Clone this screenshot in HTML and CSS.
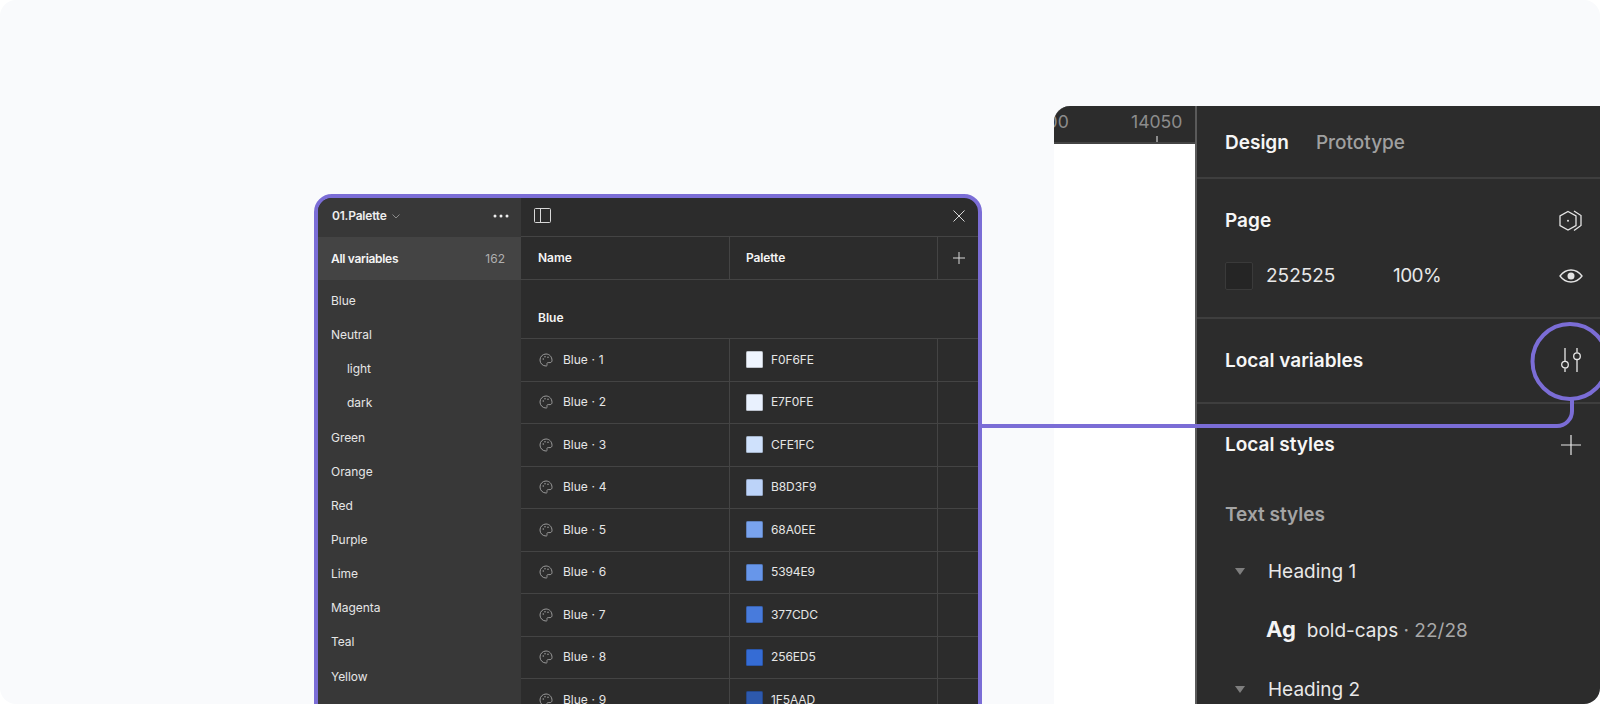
FILE: index.html
```html
<!DOCTYPE html>
<html lang="en">
<head>
<meta charset="utf-8">
<title>Local variables</title>
<link rel="stylesheet" href="styles.css">
</head>
<body>
<svg width="0" height="0" class="defs">
  <symbol id="palette" viewBox="0 0 14 14">
    <path d="M7 1a6 6 0 1 0 0 12c1.100 0 1.400-.8 1-1.500-.5-.9.2-1.900 1.200-1.900H11c1.200 0 2-.9 2-2.100C13 3.600 10.300 1 7 1z" fill="none" stroke="#9a9a9a" stroke-width="1"/>
    <circle cx="4.300" cy="6" r=".8" fill="#9a9a9a"/><circle cx="6" cy="3.800" r=".8" fill="#9a9a9a"/><circle cx="9" cy="4.200" r=".8" fill="#9a9a9a"/>
  </symbol>
</svg>
<main class="hero">
  <section class="vars">
    <aside class="side">
      <div class="side-head">
        <span class="file">01.Palette</span>
        <svg class="caret" width="8" height="5" viewBox="0 0 8 5"><path d="M.5.5 4 4 7.500.5" fill="none" stroke="#8a8a8a"/></svg>
        <svg class="dots" width="16" height="4" viewBox="0 0 16 4"><circle cx="2" cy="2" r="1.500"/><circle cx="8" cy="2" r="1.500"/><circle cx="14" cy="2" r="1.500"/></svg>
      </div>
      <div class="side-all"><span class="all">All variables</span><span class="count">162</span></div>
      <ul class="side-list">
        <li>Blue</li><li>Neutral</li><li class="sub">light</li><li class="sub">dark</li><li>Green</li><li>Orange</li><li>Red</li><li>Purple</li><li>Lime</li><li>Magenta</li><li>Teal</li><li>Yellow</li>
      </ul>
    </aside>
    <div class="table">
      <div class="tbar">
        <svg width="17" height="15" viewBox="0 0 17 15"><rect x=".5" y=".5" width="16" height="14" rx="1" fill="none" stroke="#d8d8d8"/><path d="M6.500 .5v14" stroke="#d8d8d8"/></svg>
        <svg width="12" height="12" viewBox="0 0 12 12"><path d="M.5.5l11 11M11.500.5l-11 11" stroke="#d8d8d8"/></svg>
      </div>
      <div class="row head"><div class="c1">Name</div><div class="c2">Palette</div><div class="c3"><svg width="12" height="12" viewBox="0 0 12 12"><path d="M6 0v12M0 6h12" stroke="#d8d8d8"/></svg></div></div>
      <div class="group">Blue</div>
      <div class="row"><div class="c1"><svg class="pal" width="14" height="14"><use href="#palette"/></svg>Blue · 1</div><div class="c2"><i class="sw sw1"></i>F0F6FE</div><div class="c3"></div></div>
      <div class="row"><div class="c1"><svg class="pal" width="14" height="14"><use href="#palette"/></svg>Blue · 2</div><div class="c2"><i class="sw sw2"></i>E7F0FE</div><div class="c3"></div></div>
      <div class="row"><div class="c1"><svg class="pal" width="14" height="14"><use href="#palette"/></svg>Blue · 3</div><div class="c2"><i class="sw sw3"></i>CFE1FC</div><div class="c3"></div></div>
      <div class="row"><div class="c1"><svg class="pal" width="14" height="14"><use href="#palette"/></svg>Blue · 4</div><div class="c2"><i class="sw sw4"></i>B8D3F9</div><div class="c3"></div></div>
      <div class="row"><div class="c1"><svg class="pal" width="14" height="14"><use href="#palette"/></svg>Blue · 5</div><div class="c2"><i class="sw sw5"></i>68A0EE</div><div class="c3"></div></div>
      <div class="row"><div class="c1"><svg class="pal" width="14" height="14"><use href="#palette"/></svg>Blue · 6</div><div class="c2"><i class="sw sw6"></i>5394E9</div><div class="c3"></div></div>
      <div class="row"><div class="c1"><svg class="pal" width="14" height="14"><use href="#palette"/></svg>Blue · 7</div><div class="c2"><i class="sw sw7"></i>377CDC</div><div class="c3"></div></div>
      <div class="row"><div class="c1"><svg class="pal" width="14" height="14"><use href="#palette"/></svg>Blue · 8</div><div class="c2"><i class="sw sw8"></i>256ED5</div><div class="c3"></div></div>
      <div class="row"><div class="c1"><svg class="pal" width="14" height="14"><use href="#palette"/></svg>Blue · 9</div><div class="c2"><i class="sw sw9"></i>1F5AAD</div><div class="c3"></div></div>
    </div>
  </section>

  <section class="editor">
    <div class="canvas">
      <div class="ruler">
        <span class="r-old">14000</span>
        <span class="r-new">14050</span>
        <i class="tick"></i>
      </div>
    </div>
    <div class="panel">
      <div class="tabs"><span class="on">Design</span><span class="off">Prototype</span></div>
      <div class="sec page">
        <div class="line head-line"><b>Page</b>
          <svg width="26" height="22" viewBox="0 0 26 22" fill="none" stroke="#e4e4e4" stroke-width="1.300"><path d="M10 1.500l8 4.500v9.500l-8 4.500-8-4.500V6z"/><path d="M16 1l7 4.500v10L16 20.500"/><circle cx="10" cy="10.700" r="1" fill="#e4e4e4" stroke="none"/></svg>
        </div>
        <div class="line fill"><i class="pg-sw"></i><span class="hex">252525</span><span class="pct">100%</span>
          <svg width="24" height="14" viewBox="0 0 24 14" fill="none" stroke="#e4e4e4" stroke-width="1.300"><path d="M1 7c3-4 7-6 11-6s8 2 11 6c-3 4-7 6-11 6S4 11 1 7z"/><circle cx="12" cy="7" r="3.500" fill="#e4e4e4" stroke="none"/></svg>
        </div>
      </div>
      <div class="sec vars-sec"><b>Local variables</b>
        <svg class="sliders" width="20" height="24" viewBox="0 0 20 24" fill="none" stroke="#e8e8e8" stroke-width="1.300"><path d="M4 0v13M4 20.500V24M16 0v4.500M16 12v12"/><circle cx="4" cy="16.700" r="3.300"/><circle cx="16" cy="8.200" r="3.300"/></svg>
      </div>
      <div class="styles">
        <div class="st-head"><b>Local styles</b>
          <svg width="20" height="20" viewBox="0 0 20 20"><path d="M10 0v20M0 10h20" stroke="#e8e8e8" stroke-width="1.200"/></svg>
        </div>
        <div class="st-label">Text styles</div>
        <div class="st-row"><i class="tri"></i>Heading 1</div>
        <div class="st-item"><span class="ag">Ag</span><span>bold-caps<span class="meta"> · 22/28</span></span></div>
        <div class="st-row"><i class="tri"></i>Heading 2</div>
      </div>
    </div>
  </section>

  <svg class="link" width="1600" height="704" viewBox="0 0 1600 704" fill="none" stroke="#7B6DD6" stroke-width="4">
    <circle cx="1570" cy="361.500" r="37.500"/>
    <path d="M982 426H1557a15 15 0 0 0 15-15V399"/>
  </svg>
</main>
</body>
</html>
```

FILE: styles.css
```css
* { box-sizing: border-box; }
html, body { margin: 0; height: 704px; overflow: hidden; background: #fff; }
body { font-family: Inter, "Liberation Sans", sans-serif; color: #eee; }
.defs { position: absolute; }
ul { list-style: none; margin: 0; padding: 0; }
i { display: block; }

.hero { position: relative; width: 1600px; height: 704px; background: #F9FAFC; border-radius: 16px; overflow: hidden; }
.link { position: absolute; left: 0; top: 0; }

/* variables window */
.vars { position: absolute; left: 314px; top: 194px; width: 668px; height: 560px; display: flex; border: 4px solid #7B6DD6; border-radius: 18px; overflow: hidden; font-size: 12px; line-height: 16px; background: #2C2C2C; }
.side { width: 203px; flex: none; background: #383838; color: #e6e6e6; }
.side-head { height: 39px; display: flex; align-items: center; padding: 0 12px 3px 14px; }
.file { font-weight: 600; color: #eee; letter-spacing: -.2px; }
.caret { margin-left: 5px; }
.dots { margin-left: auto; fill: #eee; }
.side-all { height: 43px; background: #444; display: flex; justify-content: space-between; align-items: center; padding: 0 16px 0 13px; font-weight: 600; color: #f4f4f4; }
.all { letter-spacing: -.3px; }
.count { font-weight: 400; color: #b0b0b0; }
.side-list { padding-top: 4px; }
.side-list li { height: 34.15px; padding-left: 13px; display: flex; align-items: center; letter-spacing: -.05px; }
.side-list .sub { padding-left: 29px; }

.table { flex: 1; min-width: 0; color: #e6e6e6; }
.tbar { height: 39px; display: flex; align-items: center; justify-content: space-between; padding: 0 13px 3px; border-bottom: 1px solid #444; }
.row { height: 42.5px; display: grid; grid-template-columns: 209px 208px 1fr; border-bottom: 1px solid #444; }
.row.head { height: 43px; font-weight: 600; color: #f4f4f4; }
.c1, .c2, .c3 { display: flex; align-items: center; }
.c1 { padding-left: 17px; border-right: 1px solid #444; word-spacing: .3px; }
.c2 { padding-left: 16px; border-right: 1px solid #444; letter-spacing: -.1px; }
.c3 { justify-content: center; padding-left: 2px; }
.group { height: 59px; padding: 30px 0 0 17px; font-weight: 600; color: #f4f4f4; border-bottom: 1px solid #444; }
.pal { margin: 0 10px 0 1px; flex: none; }
.sw { width: 17px; height: 17px; margin-right: 8px; border-radius: 1.5px; border: 1px solid rgba(0,0,0,.2); flex: none; }
.sw1 { background: #EFF5FE; }
.sw2 { background: #E9F1FE; }
.sw3 { background: #CFE1FC; }
.sw4 { background: #BCD3F9; }
.sw5 { background: #79A3EE; }
.sw6 { background: #6796EA; }
.sw7 { background: #487BDC; }
.sw8 { background: #356CD5; }
.sw9 { background: #2D59AD; }

/* editor window */
.editor { position: absolute; left: 1054px; top: 106px; width: 546px; height: 598px; display: flex; background: #2C2C2C; border-radius: 16px 0 0 0; overflow: hidden; }
.canvas { width: 141px; flex: none; background: #fff; }
.ruler { position: relative; height: 38px; background: #2C2C2C; border-bottom: 2px solid #444; overflow: hidden; font-size: 17.6px; line-height: 22px; color: #8c8c8c; }
.r-old { position: absolute; left: -37px; top: 5px; }
.r-new { position: absolute; left: 77px; top: 5px; }
.tick { position: absolute; left: 102px; top: 30px; width: 1.500px; height: 6px; background: #8c8c8c; }

.panel { flex: 1; min-width: 0; border-left: 2px solid #5a5a5a; font-size: 19px; line-height: 24px; }
.panel b { font-weight: 600; color: #f6f6f6; }
.tabs { height: 73px; display: flex; gap: 27px; align-items: center; padding: 3px 0 0 28px; border-bottom: 2px solid #3e3e3e; font-weight: 600; }
.tabs .on { color: #f6f6f6; }
.tabs .off { color: #a0a0a0; font-weight: 500; }
.sec { border-bottom: 2px solid #3e3e3e; padding: 0 17px 0 28px; }
.page { height: 140px; }
.line { display: flex; align-items: center; }
.head-line { height: 83px; }
.line > svg { margin-left: auto; }
.head-line svg { margin-right: -1px; }
.fill { height: 28px; color: #e8e8e8; }
.pg-sw { width: 28px; height: 28px; background: #252525; border: 1px solid #3a3a3a; border-radius: 2px; margin-right: 13px; }
.hex { width: 127px; }
.pct { letter-spacing: -.6px; }
.vars-sec { height: 85px; display: flex; align-items: center; justify-content: space-between; }
.sliders { margin: -1px 2px 0 0; }
.styles { padding: 0 19px 0 28px; color: #e8e8e8; }
.st-head { height: 82px; display: flex; align-items: center; justify-content: space-between; }
.st-label { height: 56px; padding-top: 17px; font-weight: 600; color: #a4a4a4; }
.st-row { height: 59px; display: flex; align-items: center; padding-left: 10px; }
.tri { width: 0; height: 0; border-left: 5.500px solid transparent; border-right: 5.500px solid transparent; border-top: 7px solid #7e7e7e; margin-right: 23px; }
.st-item { height: 59px; display: flex; align-items: center; padding-left: 41px; }
.ag { font-size: 22px; font-weight: 700; color: #f4f4f4; margin-right: 11px; position: relative; top: -2px; }
.meta { color: #a8a8a8; }
```
